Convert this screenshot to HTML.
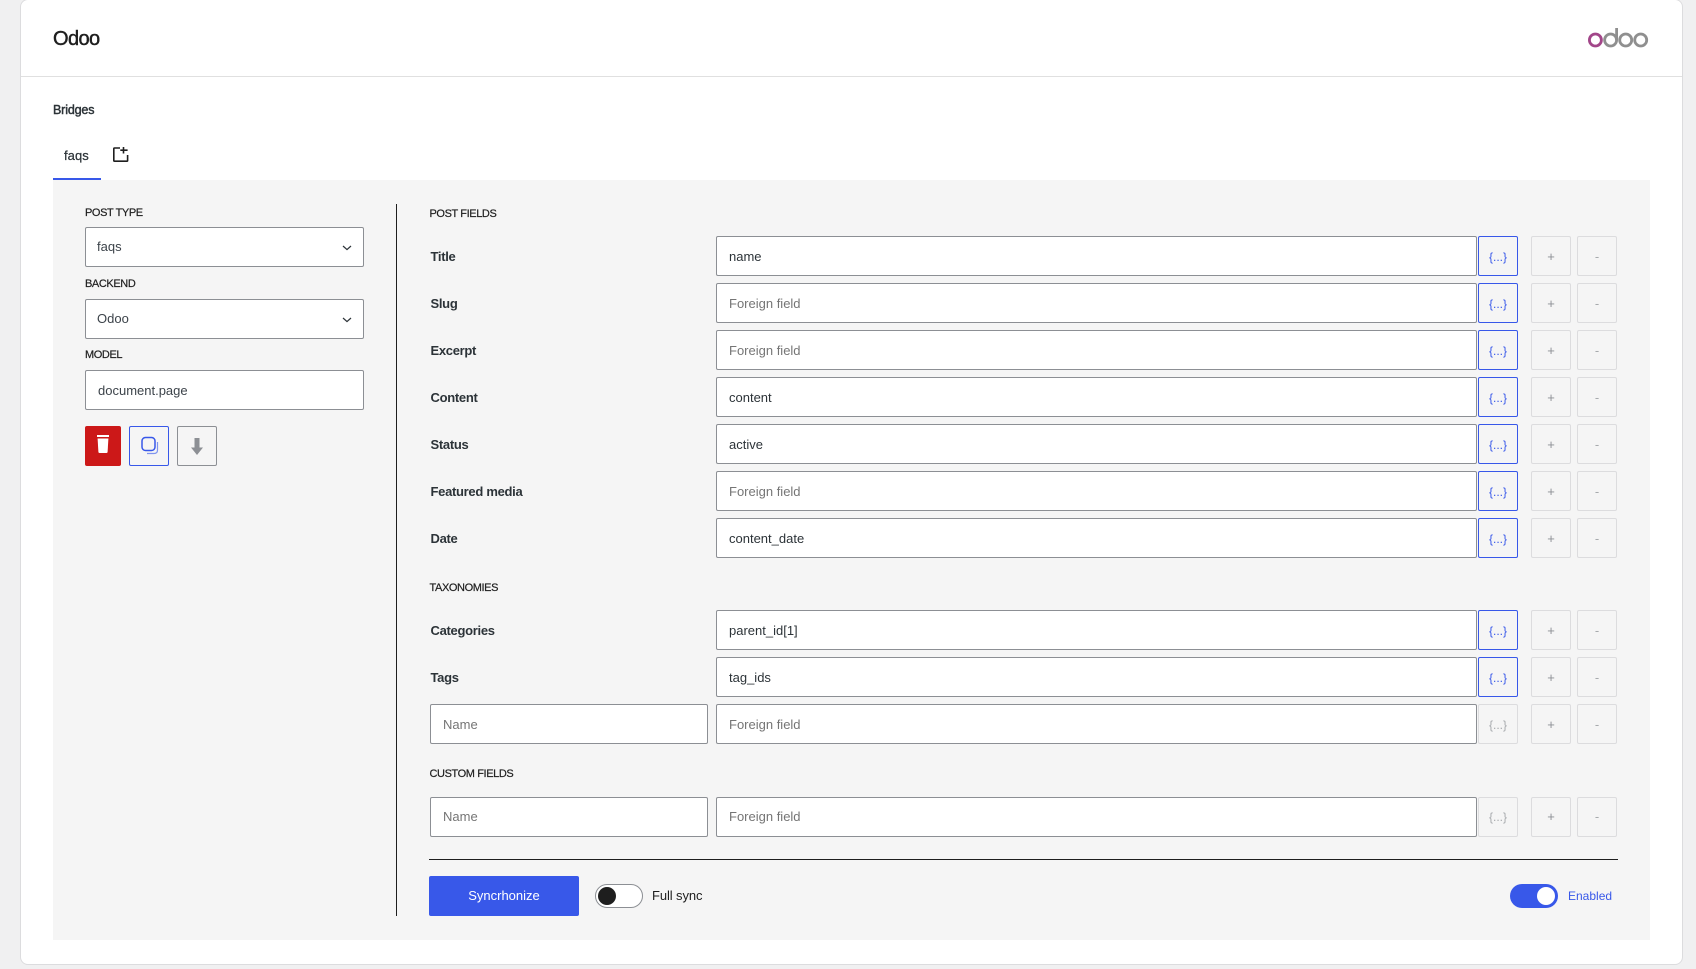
<!DOCTYPE html>
<html><head><meta charset="utf-8"><title>Odoo</title>
<style>
html,body{margin:0;padding:0;width:1696px;height:969px;overflow:hidden;background:#f0f0f1;font-family:"Liberation Sans",sans-serif;font-size:13px;color:#2c3338}
div,span{position:absolute;box-sizing:border-box;white-space:nowrap}
svg{position:absolute;overflow:visible}
.card{left:20px;top:-1px;width:1663px;height:966px;background:#fff;border:1px solid #dcdcde;border-radius:8px}
.panel{left:53px;top:180px;width:1597px;height:760px;background:#f5f5f5}
.sec{font-size:11px;letter-spacing:-.4px;line-height:14px;height:14px;color:#1e1e1e;-webkit-text-stroke:.2px #1e1e1e}
.lab{left:430.5px;height:20px;line-height:20px;font-weight:bold;letter-spacing:-.3px;color:#2c3338}
.in{height:40px;line-height:40px;background:#fff;border:1px solid #8c8f94;border-radius:2px;padding-left:12px;color:#2c3338}
.in.sel{line-height:38px}
.f{left:716px;width:761px}
.n{left:430px;width:278px}
.ph{color:#757575}
.b{height:40px;width:40px;line-height:40px;text-align:center;border:1px solid #dcdcde;border-radius:2px;color:#a7aaad;font-size:12px}
.v{left:1478px;border-color:#3858e9;color:#3858e9}
.vd{left:1478px}
.p{left:1531px;color:#8c8f94;font-size:13px}
.m{left:1577px;color:#a7aaad;font-size:13px}
.lh{line-height:38px}
</style></head><body>
<div class="card"></div>
<div style="left:21px;right:14px;top:76px;height:1px;background:#e0e0e0"></div>
<div style="left:53px;top:26px;font-size:20px;line-height:26px;letter-spacing:-.6px;color:#1e1e1e;-webkit-text-stroke:.45px #1e1e1e">Odoo</div>
<svg style="left:0;top:0" width="1696" height="80" fill="none" stroke-width="2.8">
<circle cx="1595.4" cy="40" r="6" stroke="#a24689"/>
<circle cx="1610.6" cy="40" r="6" stroke="#8f8f8f"/>
<path d="M1616.6 28V40" stroke="#8f8f8f"/>
<circle cx="1625.7" cy="40" r="6" stroke="#8f8f8f"/>
<circle cx="1640.7" cy="40" r="6" stroke="#8f8f8f"/>
</svg>
<div style="left:53px;top:102px;line-height:16px;font-size:12.5px;letter-spacing:-.15px;color:#2c3338;-webkit-text-stroke:.45px #2c3338">Bridges</div>
<div style="left:64px;top:148px;line-height:16px;letter-spacing:.05px;color:#2c3338;-webkit-text-stroke:.25px #2c3338">faqs</div>
<svg style="left:0;top:0" width="140" height="170" fill="none" stroke="#1e1e1e" stroke-width="1.6">
<path d="M120 148H114.5Q113.8 148 113.8 148.8V160.5Q113.8 161.2 114.5 161.2H127Q127.6 161.2 127.6 160.5V155"/>
<path d="M123.5 147V153.5M120.3 150.2H127.6"/>
</svg>
<div class="panel"></div>
<div style="left:53px;top:178px;width:48px;height:2px;background:#3858e9"></div>

<div class="sec" style="left:85px;top:206px">POST TYPE</div>
<div class="in sel" style="left:85px;top:227px;width:279px;padding-left:11px;color:#3c434a">faqs</div>
<div class="sec" style="left:85px;top:277px">BACKEND</div>
<div class="in sel" style="left:85px;top:299px;width:279px;padding-left:11px;color:#3c434a">Odoo</div>
<div class="sec" style="left:85px;top:348px">MODEL</div>
<div class="in" style="left:85px;top:370px;width:279px;color:#3c434a">document.page</div>
<svg style="left:0;top:0" width="360" height="330" fill="none" stroke="#2c3338" stroke-width="1.2">
<path d="M343 246L347 249.6L351 246"/>
<path d="M343 318L347 321.6L351 318"/>
</svg>
<div style="left:85px;top:426px;width:36px;height:40px;background:#cc1818;border-radius:2px"></div>
<div style="left:129px;top:426px;width:40px;height:40px;border:1px solid #3858e9;border-radius:2px"></div>
<div style="left:177px;top:426px;width:40px;height:40px;border:1px solid #8c8f94;border-radius:2px"></div>
<svg style="left:0;top:0" width="230" height="470">
<rect x="97" y="435" width="12" height="2" fill="#fff"/>
<path d="M97.6 438.5H108.4L107.6 452Q107.5 453 106.5 453H99.5Q98.5 453 98.4 452Z" fill="#fff"/>
<rect x="142" y="437.5" width="13" height="13" rx="3.5" fill="none" stroke="#3858e9" stroke-width="1.5"/>
<path d="M157.5 442V450Q157.5 453.5 154 453.5H147" fill="none" stroke="#7f94ef" stroke-width="1.2"/>
<path d="M194.5 438H199.5V447.5H203L197 455L191 447.5H194.5Z" fill="#8c8f94"/>
</svg>

<div style="left:396px;top:204px;width:1px;height:712px;background:#1e1e1e"></div>

<div class="sec" style="left:429.5px;top:207px">POST FIELDS</div>
<div class="lab" style="top:247px">Title</div>
<div class="in f" style="top:236px">name</div><div class="b v" style="top:236px">{...}</div><div class="b p" style="top:236px">+</div><div class="b m" style="top:236px">-</div>
<div class="lab" style="top:294px">Slug</div>
<div class="in f ph" style="top:283px">Foreign field</div><div class="b v" style="top:283px">{...}</div><div class="b p" style="top:283px">+</div><div class="b m" style="top:283px">-</div>
<div class="lab" style="top:341px">Excerpt</div>
<div class="in f ph" style="top:330px">Foreign field</div><div class="b v" style="top:330px">{...}</div><div class="b p" style="top:330px">+</div><div class="b m" style="top:330px">-</div>
<div class="lab" style="top:388px">Content</div>
<div class="in f" style="top:377px">content</div><div class="b v" style="top:377px">{...}</div><div class="b p" style="top:377px">+</div><div class="b m" style="top:377px">-</div>
<div class="lab" style="top:435px">Status</div>
<div class="in f" style="top:424px">active</div><div class="b v" style="top:424px">{...}</div><div class="b p" style="top:424px">+</div><div class="b m" style="top:424px">-</div>
<div class="lab" style="top:482px">Featured media</div>
<div class="in f ph" style="top:471px">Foreign field</div><div class="b v" style="top:471px">{...}</div><div class="b p" style="top:471px">+</div><div class="b m" style="top:471px">-</div>
<div class="lab" style="top:529px">Date</div>
<div class="in f" style="top:518px">content_date</div><div class="b v" style="top:518px">{...}</div><div class="b p" style="top:518px">+</div><div class="b m" style="top:518px">-</div>

<div class="sec" style="left:429.5px;top:581px">TAXONOMIES</div>
<div class="lab" style="top:621px">Categories</div>
<div class="in f" style="top:610px">parent_id[1]</div><div class="b v" style="top:610px">{...}</div><div class="b p" style="top:610px">+</div><div class="b m" style="top:610px">-</div>
<div class="lab" style="top:668px">Tags</div>
<div class="in f" style="top:657px">tag_ids</div><div class="b v" style="top:657px">{...}</div><div class="b p" style="top:657px">+</div><div class="b m" style="top:657px">-</div>
<div class="in n ph" style="top:704px">Name</div>
<div class="in f ph" style="top:704px">Foreign field</div><div class="b vd" style="top:704px">{...}</div><div class="b p" style="top:704px">+</div><div class="b m" style="top:704px">-</div>

<div class="sec" style="left:429.5px;top:767px">CUSTOM FIELDS</div>
<div class="in n ph lh" style="top:797px">Name</div>
<div class="in f ph lh" style="top:797px">Foreign field</div><div class="b vd lh" style="top:797px">{...}</div><div class="b p lh" style="top:797px">+</div><div class="b m lh" style="top:797px">-</div>

<div style="left:429px;top:859px;width:1189px;height:1px;background:#1e1e1e"></div>
<div style="left:429px;top:876px;width:150px;height:40px;line-height:40px;text-align:center;background:#3858e9;color:#fff;border-radius:2px">Syncrhonize</div>
<div style="left:595px;top:884px;width:48px;height:24px;background:#fff;border:1px solid #8c8f94;border-radius:12px"></div>
<div style="left:598px;top:887px;width:18px;height:18px;background:#1e1e1e;border-radius:50%"></div>
<div style="left:652px;top:888px;line-height:16px;letter-spacing:-.1px;color:#1e1e1e">Full sync</div>
<div style="left:1510px;top:884px;width:48px;height:24px;background:#3858e9;border-radius:12px"></div>
<div style="left:1537px;top:887px;width:18px;height:18px;background:#fff;border-radius:50%"></div>
<div style="left:1568px;top:888px;line-height:16px;font-size:12px;color:#3858e9">Enabled</div>
</body></html>
